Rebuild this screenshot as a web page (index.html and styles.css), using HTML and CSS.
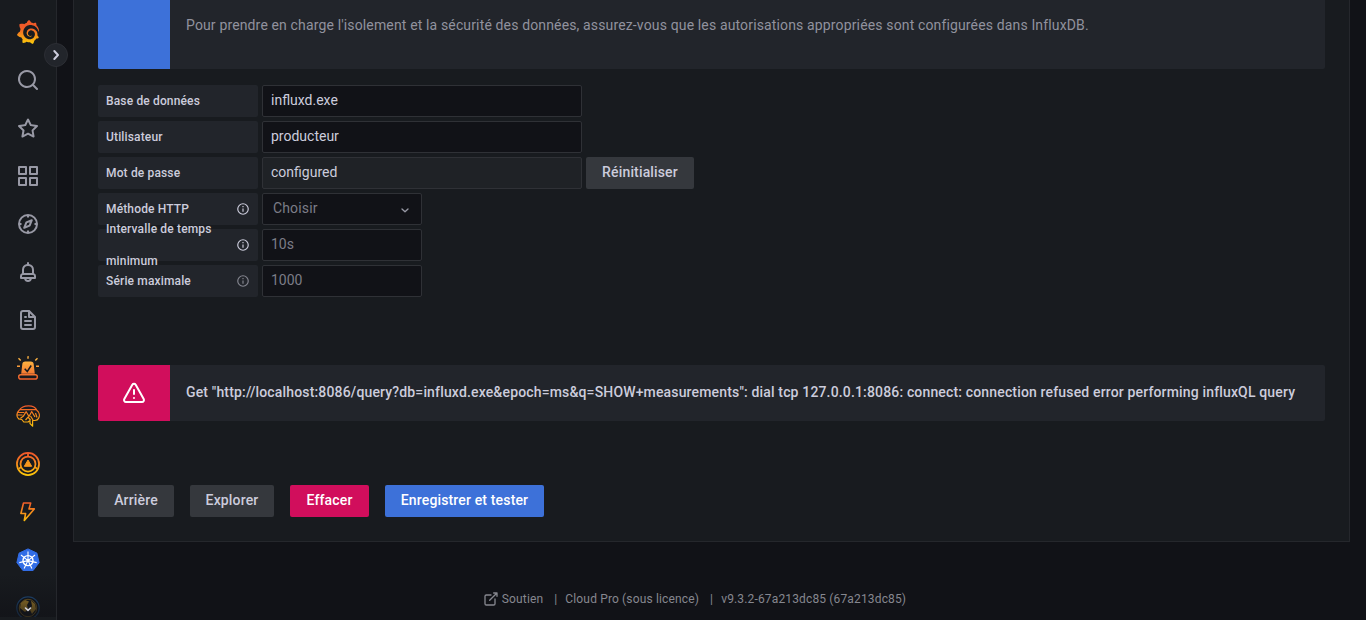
FILE: index.html
```html
<!DOCTYPE html>
<html lang="fr">
<head>
<meta charset="utf-8">
<title>InfluxDB</title>
<link rel="stylesheet" href="styles.css">
</head>
<body>
<svg class="defs" width="0" height="0">
  <defs>
    <linearGradient id="warm" x1="0" y1="0" x2="0" y2="24" gradientUnits="userSpaceOnUse"><stop offset="0.1" stop-color="#f15b2a"/><stop offset="0.95" stop-color="#fbc60a"/></linearGradient>
    <linearGradient id="warm-up" x1="0" y1="24" x2="0" y2="0" gradientUnits="userSpaceOnUse"><stop offset="0.05" stop-color="#f1602b"/><stop offset="0.75" stop-color="#fbb040"/></linearGradient>
    <linearGradient id="logo" x1="175" y1="445" x2="175" y2="114" gradientUnits="userSpaceOnUse"><stop offset="0" stop-color="#fff100"/><stop offset="1" stop-color="#f05a28"/></linearGradient>
  </defs>
</svg>
<div class="app">
  <nav class="sidebar">
    <a class="nav-item"><svg width="24" height="24" viewBox="0 0 351 365"><path fill="url(#logo)" d="M342,161.2c-0.6-6.1-1.6-13.1-3.6-20.9c-2-7.7-5-16.2-9.4-25c-4.4-8.8-10.1-17.9-17.5-26.8c-2.9-3.5-6.1-6.9-9.5-10.2c5.1-20.3-6.2-37.9-6.2-37.9c-19.5-1.2-31.9,6.1-36.5,9.4c-0.8-0.3-1.5-0.7-2.3-1c-3.3-1.3-6.7-2.6-10.3-3.7c-3.5-1.1-7.1-2.1-10.8-3c-3.7-0.9-7.4-1.6-11.2-2.2c-0.7-0.1-1.3-0.2-2-0.3c-8.5-27.2-32.9-38.6-32.9-38.6c-27.3,17.3-32.4,41.5-32.4,41.5s-0.1,0.5-0.3,1.4c-1.5,0.4-3,0.9-4.5,1.3c-2.1,0.6-4.2,1.4-6.2,2.2c-2.1,0.8-4.1,1.6-6.2,2.5c-4.1,1.8-8.2,3.8-12.2,6c-3.9,2.2-7.7,4.6-11.4,7.1c-0.5-0.2-1-0.4-1-0.4c-37.8-14.4-71.3,2.9-71.3,2.9c-3.1,40.2,15.1,65.5,18.7,70.1c-0.9,2.5-1.7,5-2.5,7.5c-2.8,9.1-4.9,18.4-6.2,28.1c-0.2,1.4-0.4,2.8-0.5,4.2C18.8,192.7,8.5,228,8.5,228c29.1,33.5,63.1,35.6,63.1,35.6c0,0,0.1-0.1,0.1-0.1c4.3,7.7,9.3,15,14.9,21.9c2.4,2.9,4.8,5.6,7.4,8.3c-10.6,30.4,1.5,55.6,1.5,55.6c32.4,1.2,53.7-14.2,58.2-17.7c3.2,1.1,6.5,2.1,9.8,2.9c10,2.6,20.2,4.1,30.4,4.5c2.5,0.1,5.1,0.2,7.6,0.1l1.2,0l0.8,0l1.6,0l1.6-0.1l0,0.1c15.3,21.8,42.1,24.9,42.1,24.9c19.1-20.1,20.2-40.1,20.2-44.4l0,0c0,0,0-0.1,0-0.3c0-0.4,0-0.6,0-0.6l0,0c0-0.3,0-0.6,0-0.9c4-2.8,7.8-5.8,11.4-9.1c7.6-6.9,14.3-14.8,19.9-23.3c0.5-0.8,1-1.6,1.5-2.4c21.6,1.2,36.9-13.4,36.9-13.4c-3.6-22.5-16.4-33.5-19.1-35.6l0,0c0,0-0.1-0.1-0.3-0.2c-0.2-0.1-0.2-0.2-0.2-0.2c-0.1-0.1-0.3-0.2-0.5-0.3c0.1-1.4,0.2-2.7,0.3-4.1c0.2-2.4,0.2-4.9,0.2-7.3l0-1.8l0-0.9l0-0.5l-0.1-2.1l-0.1-2c0-0.7-0.1-1.3-0.2-1.9c-0.1-0.6-0.1-1.3-0.2-1.9l-0.2-1.9l-0.3-1.9c-0.4-2.5-0.8-4.9-1.4-7.4c-2.3-9.7-6.1-18.9-11-27.2c-5-8.3-11.2-15.6-18.3-21.8c-7-6.2-14.9-11.2-23.1-14.9c-8.3-3.7-16.9-6.1-25.5-7.2c-4.3-0.6-8.6-0.8-12.9-0.7l-1.6,0l-1.6,0l-1.6,0.1c-0.6,0-1.2,0.1-1.7,0.1c-2.2,0.2-4.4,0.5-6.5,0.9c-8.6,1.6-16.7,4.7-23.8,9c-7.1,4.3-13.3,9.6-18.3,15.6c-5,6-8.9,12.7-11.6,19.6c-2.7,6.9-4.2,14.1-4.6,21c-0.1,1.7-0.1,3.5-0.1,5.2c0,0.4,0,0.9,0,1.3l0.1,1.4c0.1,0.8,0.1,1.7,0.2,2.5c0.3,3.5,1,6.9,1.9,10.1c1.9,6.5,4.9,12.4,8.6,17.4c3.7,5,8.2,9.1,12.9,12.4c4.7,3.2,9.8,5.5,14.8,7c5,1.5,10,2.1,14.7,2.1c0.6,0,1.2,0,1.7,0c0.6,0,1.2,0,1.8-0.1c0.5,0,1-0.1,1.5-0.1l0.9-0.2c0.3,0,0.6-0.1,0.9-0.1c0.6-0.1,1.1-0.2,1.7-0.3c0.6-0.1,1.1-0.2,1.6-0.4c1.1-0.2,2.1-0.6,3.1-0.9c2-0.7,4-1.5,5.7-2.4c1.8-0.9,3.4-2,5-3c0.4-0.3,0.9-0.6,1.3-1c1.6-1.3,1.9-3.7,0.6-5.3c-1.1-1.4-3.1-1.8-4.7-0.9c-0.4,0.2-0.8,0.4-1.2,0.6c-1.4,0.7-2.8,1.3-4.3,1.8c-1.5,0.5-3.1,0.9-4.7,1.2c-0.8,0.1-1.6,0.2-2.5,0.3c-0.8,0.1-1.7,0.1-2.5,0.1c-1.3,0-2.5,0-3.8-0.2c-0.5-0.1-0.9-0.1-1.4-0.2c-3.7-0.5-7.4-1.6-10.9-3.2c-3.6-1.6-7-3.8-10.1-6.6c-3.1-2.8-5.8-6.1-7.9-9.9c-2.1-3.8-3.6-8-4.3-12.4c-0.3-2.2-0.5-4.5-0.4-6.7l0.2-3.5c0.1-1.2,0.3-2.4,0.5-3.6c1.7-9.6,6.5-19,13.9-26.1c1.9-1.8,3.9-3.4,6-4.9c2.1-1.5,4.4-2.8,6.8-3.9c2.4-1.1,4.8-2,7.4-2.7c2.5-0.7,5.1-1.1,7.8-1.4c1.3-0.1,2.6-0.2,4-0.2l2.7,0l1.4,0.1c2.9,0.2,5.7,0.6,8.5,1.3c5.6,1.2,11.1,3.3,16.2,6.1c10.2,5.7,18.9,14.5,24.2,25.1c2.7,5.3,4.6,11,5.5,16.9c0.2,1.5,0.4,3,0.5,4.5l0.2,2.2l0,4.3c0,0.7-0.1,1.9-0.1,2.6c-0.1,1.6-0.3,3.3-0.5,4.9c-0.2,1.6-0.5,3.2-0.8,4.8c-0.3,1.6-0.7,3.2-1.1,4.7c-0.8,3.1-1.8,6.2-3,9.3c-2.4,6-5.6,11.8-9.4,17.1c-7.7,10.6-18.2,19.2-30.2,24.7c-6,2.7-12.3,4.7-18.8,5.7c-3.2,0.6-6.5,0.9-9.8,1l-5,0c-1.8,0-3.5-0.1-5.3-0.3c-7-0.5-13.9-1.8-20.7-3.7c-6.7-1.9-13.2-4.6-19.4-7.8c-12.3-6.6-23.4-15.6-32-26.5c-4.3-5.4-8.1-11.3-11.2-17.4c-3.1-6.1-5.6-12.6-7.4-19.1c-1.8-6.6-2.9-13.3-3.4-20.1l-0.1-2l0-8.5c0.1-3.3,0.4-6.8,0.8-10.2c0.4-3.4,1-6.9,1.7-10.3c0.7-3.4,1.5-6.8,2.5-10.2c1.9-6.7,4.3-13.2,7.1-19.3c5.7-12.2,13.1-23.1,22-31.8c2.2-2.2,4.5-4.2,6.9-6.2c2.4-1.9,4.9-3.7,7.5-5.4c2.5-1.7,5.2-3.2,7.9-4.6c1.3-0.7,2.7-1.4,4.1-2l4.2-1.8c2.8-1.2,5.7-2.2,8.7-3.1l4.4-1.3c1.5-0.4,3-0.8,4.5-1.1l6.9-1.4l4.6-0.7l5.2-0.6l4.3-0.4l5-0.2c2.9-0.1,5.9-0.1,8.8,0c5.8,0.2,11.5,0.9,17,1.9c11.1,2.1,21.5,5.6,31,10.3c9.5,4.6,17.9,10.3,25.3,16.5l2.7,2.4l5.1,4.8c0.8,0.8,1.6,1.6,2.4,2.5c3.1,3.3,6,6.6,8.6,10c5.2,6.7,9.4,13.5,12.7,19.9l1.2,2.4l3.2,7c1.2,3,2.4,5.9,3.3,8.6c1.5,4.4,2.6,8.3,3.5,11.7c0.3,1.4,1.6,2.3,3,2.1c1.5-0.1,2.6-1.3,2.6-2.8C342.6,170.4,342.5,166.1,342,161.2z"/></svg></a>
    <a class="nav-item"><svg class="uni" viewBox="0 0 24 24"><path d="M21.71,20.29,18,16.61A9,9,0,1,0,16.61,18l3.68,3.68a1,1,0,0,0,1.42,0A1,1,0,0,0,21.71,20.29ZM11,18a7,7,0,1,1,7-7A7,7,0,0,1,11,18Z"/></svg></a>
    <a class="nav-item"><svg class="uni" viewBox="0 0 24 24"><path d="M22,9.67A1,1,0,0,0,21.14,9l-5.69-.83L12.9,3a1,1,0,0,0-1.8,0L8.55,8.16,2.86,9a1,1,0,0,0-.81.68,1,1,0,0,0,.25,1l4.13,4-1,5.68A1,1,0,0,0,6.9,21.44L12,18.77l5.1,2.67a.93.93,0,0,0,.46.12,1,1,0,0,0,.59-.19,1,1,0,0,0,.4-1l-1-5.68,4.13-4A1,1,0,0,0,22,9.67Zm-6.15,4a1,1,0,0,0-.29.88l.72,4.2-3.76-2a1.06,1.06,0,0,0-.94,0l-3.76,2,.72-4.2a1,1,0,0,0-.29-.88l-3-3,4.21-.61a1,1,0,0,0,.76-.55L12,5.7l1.88,3.82a1,1,0,0,0,.76.55l4.21.61Z"/></svg></a>
    <a class="nav-item"><svg class="uni" viewBox="0 0 24 24"><path d="M10,13H3a1,1,0,0,0-1,1v7a1,1,0,0,0,1,1h7a1,1,0,0,0,1-1V14A1,1,0,0,0,10,13ZM9,20H4V15H9ZM21,2H14a1,1,0,0,0-1,1v7a1,1,0,0,0,1,1h7a1,1,0,0,0,1-1V3A1,1,0,0,0,21,2ZM20,9H15V4h5Zm1,4H14a1,1,0,0,0-1,1v7a1,1,0,0,0,1,1h7a1,1,0,0,0,1-1V14A1,1,0,0,0,21,13Zm-1,7H15V15h5ZM10,2H3A1,1,0,0,0,2,3v7a1,1,0,0,0,1,1h7a1,1,0,0,0,1-1V3A1,1,0,0,0,10,2ZM9,9H4V4H9Z"/></svg></a>
    <a class="nav-item"><svg class="line" viewBox="0 0 24 24"><circle cx="12" cy="12" r="9"/><path d="M12 3v2.500M12 18.500v2.500M3 12h2.500M18.500 12h2.500M15.800 8.200l-2.200 5.400-5.400 2.200 2.200-5.400z"/></svg></a>
    <a class="nav-item"><svg class="uni" viewBox="0 0 24 24"><path d="M18,13.180V10a6,6,0,0,0-5-5.910V3a1,1,0,0,0-2,0V4.090A6,6,0,0,0,6,10v3.180A3,3,0,0,0,4,16v2a1,1,0,0,0,1,1H8.140a4,4,0,0,0,7.720,0H19a1,1,0,0,0,1-1V16A3,3,0,0,0,18,13.180ZM8,10a4,4,0,0,1,8,0v3H8Zm4,10a2,2,0,0,1-1.720-1h3.440A2,2,0,0,1,12,20Zm6-3H6V16a1,1,0,0,1,1-1H17a1,1,0,0,1,1,1Z"/></svg></a>
    <a class="nav-item"><svg class="uni" viewBox="0 0 24 24"><path d="M9,10h1a1,1,0,0,0,0-2H9a1,1,0,0,0,0,2Zm0,2a1,1,0,0,0,0,2h6a1,1,0,0,0,0-2ZM20,8.940a1.310,1.310,0,0,0-.060-.270l0-.090a1.070,1.070,0,0,0-.190-.280h0l-6-6h0a1.070,1.070,0,0,0-.280-.190A.88.88,0,0,0,13.050,2H7A3,3,0,0,0,4,5V19a3,3,0,0,0,3,3H17a3,3,0,0,0,3-3V9ZM14,5.410,16.590,8H14ZM18,19a1,1,0,0,1-1,1H7a1,1,0,0,1-1-1V5A1,1,0,0,1,7,4h5V9a1,1,0,0,0,1,1h5Zm-3-3H9a1,1,0,0,0,0,2h6a1,1,0,0,0,0-2Z"/></svg></a>
    <a class="nav-item"><svg width="24" height="24" viewBox="0 0 24 24"><g fill="none" stroke="url(#warm-up)" stroke-width="1.400"><path d="M11.999 0.300h.002v2.400M2.500 2.300l2.200 2.200M21.500 2.300l-2.200 2.200M1 10.200h3M20 10.200h3"/><rect x="2.700" y="18.700" width="18.600" height="4.300" rx="2.100"/></g><path fill="url(#warm-up)" d="M5.200 17.700 6.300 8.300a3 3 0 0 1 3-2.800h5.400a3 3 0 0 1 3 2.800l1.100 9.400z"/><path d="M8.700 12.700l2.600 2.800 3.900-6" fill="none" stroke="#181b1f" stroke-width="1.500"/></svg></a>
    <a class="nav-item"><svg width="24" height="24" viewBox="0 0 24 24"><path fill="none" stroke="url(#warm)" stroke-width="1.200" stroke-linejoin="round" d="M3.200 6.200C5 3.200 8.500 1.800 12.500 1.800s7.200 1.500 8.300 4.400c2.500 1.800 3.200 5.300 1.800 8.100-.6 1.500-2 2.200-3.800 2.200h-2.200v5.700l-2.600-2.700v-3l-2 1.500H7.800l-2-2.500-3.200-.7C.3 12.700.200 8.800 3.200 6.200zM3.500 5.700h17M2 8.500h6.300M1.500 11h5M4.500 14.300l2.700-2 3-4.600 2.800 4.800 2.700-5 3.300 5.500M9.500 16l2.500-2.800 2.500 2.800M14.500 12l2.500 4M19.500 9l1.500 4.500"/></svg></a>
    <a class="nav-item"><svg width="24" height="24" viewBox="0 0 24 24"><g fill="none" stroke="url(#warm)" stroke-width="1.750"><circle cx="12" cy="12" r="11.050"/><circle cx="12" cy="12" r="7.500"/><path d="M12 1v4M3 16.500l2.500-1.500M21 16.500 18.500 15"/></g><path fill="#f8981d" stroke="#f8981d" stroke-linejoin="round" d="M12 8l3.700 6.300H8.300z"/></svg></a>
    <a class="nav-item"><svg width="24" height="24" viewBox="0 0 24 24"><path fill="none" stroke="url(#warm)" stroke-width="1.600" stroke-linejoin="round" d="M7.500 3h7.200l-1.700 5.900h5.300L8.300 20.500l1.300-7H4.900z"/></svg></a>
    <a class="nav-item"><svg width="24" height="24" viewBox="0 0 24 24"><path fill="#326de6" stroke="#326de6" stroke-linejoin="round" d="M12 .9l8.900 4.200 2.200 9.500-6 7.900H6.900l-6-7.900 2.200-9.500z"/><g fill="none" stroke="#fff"><circle cx="12" cy="12.600" r="5" stroke-width="1.450"/><path stroke-width="1.100" d="M12 3.600v9M12 12.600 5 7M12 12.600 19 7M12 12.600l-8.700 2M12 12.600l8.700 2M12 12.600l-3.900 8M12 12.600l3.900 8"/></g><circle cx="12" cy="12.600" r="1.500" fill="#fff"/></svg></a>
    <a class="nav-item"><svg width="24" height="24" viewBox="0 0 24 24"><circle cx="12" cy="12" r="11.200" fill="#11151b" stroke="#245a94" stroke-width="1.200"/><circle cx="12" cy="12" r="8.700" fill="#16191d" stroke="#a07d28" stroke-width=".9"/><path fill="#d0a02e" d="M5 7l4-3 4 1.500-2 3.500 1 4-3 3-5-4zM15 4.500l4 3.500 1 5-4 5-2-4 2-4z"/></svg></a>
    <div class="scroll-hint"><svg width="12" height="12" viewBox="0 0 12 12"><path fill="none" stroke="#d0d1dc" stroke-width="1.600" stroke-linecap="round" stroke-linejoin="round" d="M3.500 5 6 7.300 8.500 5"/></svg></div>
    <button class="expand"><svg width="24" height="24" viewBox="0 0 24 24"><path fill="none" stroke="#ccccdc" stroke-width="2" stroke-linecap="round" stroke-linejoin="round" d="M10.300 8l3.700 4-3.700 4"/></svg></button>
  </nav>
  <main class="main">
    <section class="card">
      <div class="alert alert-info">
        <div class="alert-icon"></div>
        <div class="alert-body">Pour prendre en charge l'isolement et la sécurité des données, assurez-vous que les autorisations appropriées sont configurées dans InfluxDB.</div>
      </div>
      <div class="form">
        <div class="row"><label class="label">Base de données</label><div class="input wide">influxd.exe</div></div>
        <div class="row"><label class="label">Utilisateur</label><div class="input wide">producteur</div></div>
        <div class="row"><label class="label">Mot de passe</label><div class="input wide disabled">configured</div><button class="btn">Réinitialiser</button></div>
        <div class="row"><label class="label"><span>Méthode HTTP</span><svg class="info" viewBox="0 0 24 24"><circle cx="12" cy="12" r="9"/><path d="M12 11v5.500M12 7v2"/></svg></label><div class="input select"><span>Choisir</span><svg width="16" height="16" viewBox="0 0 24 24"><path d="M7.500 10.500l4.500 4.200 4.500-4.200"/></svg></div></div>
        <div class="row"><label class="label"><span>Intervalle de temps minimum</span><svg class="info" viewBox="0 0 24 24"><circle cx="12" cy="12" r="9"/><path d="M12 11v5.500M12 7v2"/></svg></label><div class="input placeholder">10s</div></div>
        <div class="row"><label class="label"><span>Série maximale</span><svg class="info dim" viewBox="0 0 24 24"><circle cx="12" cy="12" r="9"/><path d="M12 11v5.500M12 7v2"/></svg></label><div class="input placeholder">1000</div></div>
      </div>
      <div class="alert alert-error">
        <div class="alert-icon"><svg width="24" height="24" viewBox="0 0 24 24"><path fill="none" stroke="#fff" stroke-width="2" stroke-linecap="round" stroke-linejoin="round" d="M10.300 3.700 2.300 18a2 2 0 0 0 1.700 3h16a2 2 0 0 0 1.700-3l-8-14.300a2 2 0 0 0-3.400 0zM12 9v4M12 17v.1"/></svg></div>
        <div class="alert-body">Get "http://localhost:8086/query?db=influxd.exe&amp;epoch=ms&amp;q=SHOW+measurements": dial tcp 127.0.0.1:8086: connect: connection refused error performing influxQL query</div>
      </div>
      <div class="actions">
        <button class="btn back">Arrière</button>
        <button class="btn explore">Explorer</button>
        <button class="btn danger">Effacer</button>
        <button class="btn primary">Enregistrer et tester</button>
      </div>
    </section>
    <footer class="footer">
      <svg width="16" height="16" viewBox="0 0 24 24"><path d="M18 12v7a2 2 0 0 1-2 2H5a2 2 0 0 1-2-2V8a2 2 0 0 1 2-2h7M16 3h5v5M21 3 10 14"/></svg>
      <span class="support">Soutien</span><span class="bar">|</span><span class="license">Cloud Pro (sous licence)</span><span class="bar">|</span><span class="version">v9.3.2-67a213dc85 (67a213dc85)</span>
    </footer>
  </main>
</div>
</body>
</html>
```
FILE: styles.css
```css
* { box-sizing: border-box; }
body { margin: 0; height: 620px; overflow: hidden; background: #111217; color: #ccccdc; font: 400 14px/22px Roboto, "Liberation Sans", sans-serif; letter-spacing: 0.15px; }
.defs { position: absolute; }
.app { display: flex; height: 620px; }

.sidebar { position: relative; flex: none; width: 57px; height: 620px; padding-top: 8px; display: flex; flex-direction: column; background: #181b1f; border-right: 1px solid #25272c; }
.nav-item { flex: none; display: flex; align-items: center; justify-content: center; height: 48px; }
.uni { width: 24px; height: 24px; fill: #9899a5; }
.line { width: 24px; height: 24px; fill: none; stroke: #9899a5; stroke-width: 2; stroke-linejoin: round; }
.scroll-hint { position: absolute; left: 0; right: 0; bottom: 0; height: 46px; display: flex; justify-content: center; padding-top: 29px; background: linear-gradient(rgba(17, 18, 23, 0), rgba(17, 18, 23, 0.7) 90%); border-bottom: 3px solid #181b1f; }
.expand { position: absolute; top: 43px; right: -12px; width: 24px; height: 24px; padding: 0; display: flex; align-items: center; justify-content: center; border: 1px solid #2c2e34; border-radius: 50%; background: #22252b; }
.expand svg { flex: none; }

.main { flex: 1; min-width: 0; padding: 0 16px; }
.card { height: 542px; padding: 0 24px; background: #181b1f; border: 1px solid #25272c; border-top: 0; }
.alert { display: flex; background: #22252b; border-radius: 2px; overflow: hidden; }
.alert-icon { flex: none; width: 72px; display: flex; align-items: center; justify-content: center; }
.alert-info { height: 69px; color: #91929e; border-radius: 0 0 2px 2px; letter-spacing: 0.143px; }
.alert-info .alert-icon { background: #3d71d9; }
.alert-info .alert-body { padding: 14px 16px; }
.alert-error { height: 56px; margin-top: 68px; font-weight: 500; letter-spacing: 0.157px; }
.alert-error .alert-icon { background: #d10e5c; }
.alert-error .alert-body { padding: 16px; white-space: nowrap; }

.form { display: flex; flex-direction: column; gap: 4px; margin-top: 16px; }
.row { display: flex; gap: 4px; height: 32px; }
.label { flex: none; width: 160px; height: 32px; padding: 0 8px; display: flex; align-items: center; justify-content: space-between; background: #22252b; border-radius: 2px; font-size: 12px; font-weight: 500; line-height: 32px; letter-spacing: 0.15px; }
.info { flex: none; width: 14px; height: 14px; fill: none; stroke: #ccccdc; stroke-width: 2; }
.info.dim { stroke: #858690; }
.input { width: 160px; height: 32px; padding: 0 8px; background: #111217; border: 1px solid #2f3136; border-radius: 2px; line-height: 29px; letter-spacing: 0; }
.wide { width: 320px; }
.disabled { background: #1f2226; }
.placeholder, .select { color: #7c7d87; }
.select { display: flex; justify-content: space-between; padding: 0 8px 0 10px; letter-spacing: 0.15px; }
.select svg { margin-top: 8px; fill: none; stroke: #9899a5; stroke-width: 2; stroke-linecap: round; stroke-linejoin: round; }

.btn { flex: none; height: 32px; padding: 0 0 2px; border: 0; border-radius: 2px; background: #35383d; color: #ccccdc; font: 500 14px/30px Roboto, "Liberation Sans", sans-serif; letter-spacing: 0.15px; }
.row .btn { width: 108px; }
.actions { display: flex; gap: 16px; margin-top: 64px; }
.back { width: 76px; }
.explore { width: 84px; }
.danger { width: 79px; background: #d10e5c; color: #fff; }
.primary { width: 159px; background: #3d71d9; color: #fff; }

.footer { display: flex; align-items: center; justify-content: center; height: 18px; margin-top: 48px; padding-right: 34px; color: #86878f; font-size: 12px; line-height: 18px; letter-spacing: 0.15px; }
.footer svg { fill: none; stroke: #86878f; stroke-width: 2; stroke-linecap: round; stroke-linejoin: round; }
.support { margin-left: 3px; }
.bar { margin: 0 8px 0 11px; }
```
